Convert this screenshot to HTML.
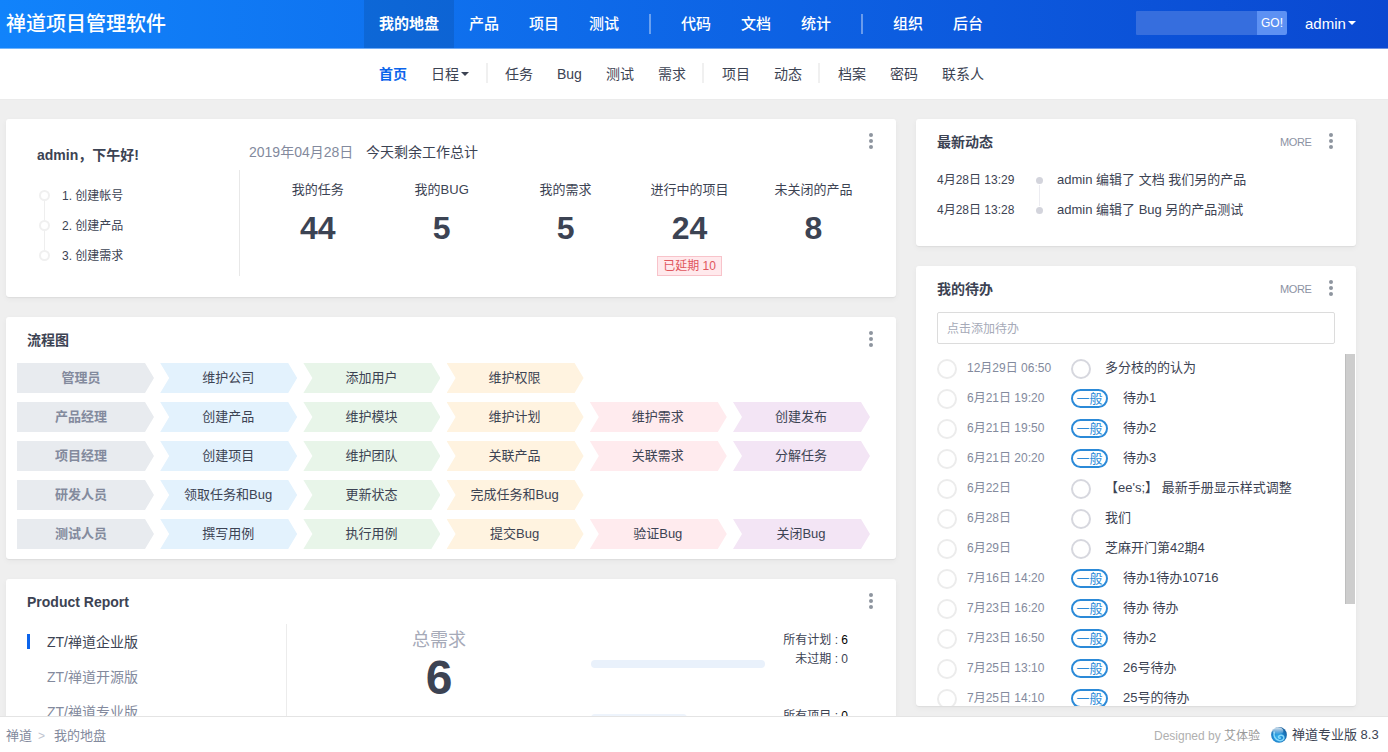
<!DOCTYPE html>
<html lang="zh-CN">
<head>
<meta charset="utf-8">
<title>我的地盘 - 禅道</title>
<style>
*{box-sizing:border-box;margin:0;padding:0}
html,body{width:1388px;height:752px;overflow:hidden}
body{background:#efefef;font-family:"Liberation Sans","Noto Sans CJK SC",sans-serif;font-size:13px;color:#3c4353;position:relative}
.abs{position:absolute;white-space:nowrap}
#header{position:absolute;left:0;top:0;width:1388px;height:49px;background:linear-gradient(180deg,rgba(255,255,255,0) 48px,rgba(255,255,255,.4) 48px),linear-gradient(90deg,#1183fb 0%,#0a48d1 100%)}
#header .title{left:6px;top:0;line-height:49px;font-size:20px;color:#fff;font-weight:500}
#header .nav{top:0;line-height:48px;font-size:15px;color:#fff;font-weight:500}
#header .active{position:absolute;left:364px;top:0;width:90px;height:48px;background:rgba(0,0,0,.1)}
#header .div{position:absolute;top:14px;width:2px;height:20px;background:rgba(255,255,255,.38);margin-left:-1px}
#subnav{position:absolute;left:0;top:49px;width:1388px;height:50px;background:#fff;box-shadow:0 1px 0 #ebebeb}
#subnav .it{top:0;line-height:50px;font-size:14px;color:#3c4353}
#subnav .div{position:absolute;top:14px;width:2px;height:20px;background:#f0f0f0;margin-left:-1px}
.panel{position:absolute;background:#fff;border-radius:3px;box-shadow:0 1px 1px rgba(0,0,0,.05),0 2px 6px 0 rgba(0,0,0,.045)}
.ptitle{font-size:14px;font-weight:bold;color:#3c4353;line-height:20px}
.dots{position:absolute;width:4px}
.dots i{display:block;width:4px;height:4px;border-radius:50%;background:#8e959f;margin-bottom:2px}
.more{font-size:11px;color:#8c92a3;letter-spacing:-0.4px;line-height:20px}
/* welcome */
.step{font-size:12px;line-height:20px;color:#3c4353}
.sc{position:absolute;width:11px;height:11px;border:2px solid #f0f0f0;border-radius:50%;background:#fff}
.tile-t{font-size:13px;line-height:20px;text-align:center;width:124px;color:#3c4353}
.tile-n{font-size:32px;line-height:40px;font-weight:bold;text-align:center;width:124px;color:#3c4353}
/* flow */
.fl{position:absolute;height:30px;width:137px;line-height:30px;font-size:13px;text-align:center;color:#3c4353;
 clip-path:polygon(0 0,128px 0,137px 15px,128px 30px,0 30px,9px 15px);padding-right:1px}
.fl.f0{clip-path:polygon(0 0,128px 0,137px 15px,128px 30px,0 30px);background:#e8ebef;color:#838a9d;font-weight:bold;padding-right:9px}
.f1{background:#e3f2fd}.f2{background:#e8f5e9}.f3{background:#fff3e0}.f4{background:#ffebee}.f5{background:#f3e5f5}
/* todo */
.c1{position:absolute;width:20px;height:20px;border:2px solid #ececec;border-radius:50%}
.c2{position:absolute;width:20px;height:20px;border:2px solid #d6d7de;border-radius:50%}
.pill{position:absolute;width:37px;height:19px;border:2px solid #2b8ad8;border-radius:10px;color:#2b8ad8;font-size:13px;line-height:15px;text-align:center}
.td{font-size:12px;color:#838a9d;line-height:20px}
.tt{font-size:13px;color:#3c4353;line-height:20px}
#footer{position:absolute;left:0;top:716px;width:1388px;height:36px;background:#fff;border-top:1px solid #e4e4e4}
</style>
</head>
<body>
<div id="header">
  <div class="active"></div>
  <div class="abs title">禅道项目管理软件</div>
  <div class="abs nav" style="left:379px;font-weight:bold">我的地盘</div>
  <div class="abs nav" style="left:469px">产品</div>
  <div class="abs nav" style="left:529px">项目</div>
  <div class="abs nav" style="left:589px">测试</div>
  <div class="div" style="left:650px"></div>
  <div class="abs nav" style="left:681px">代码</div>
  <div class="abs nav" style="left:741px">文档</div>
  <div class="abs nav" style="left:801px">统计</div>
  <div class="div" style="left:862px"></div>
  <div class="abs nav" style="left:893px">组织</div>
  <div class="abs nav" style="left:953px">后台</div>
  <div style="position:absolute;left:1136px;top:11px;width:121px;height:24px;background:#366ede;border-radius:1px 0 0 1px"></div>
  <div style="position:absolute;left:1257px;top:11px;width:30px;height:24px;background:#5d91f3;border-radius:0 2px 2px 0;color:#fff;font-size:12px;line-height:25px;text-align:center">GO!</div>
  <div class="abs" style="left:1305px;top:0;line-height:48px;font-size:15px;color:#fff">admin</div>
  <div style="position:absolute;left:1348px;top:21px;width:0;height:0;border-left:4px solid transparent;border-right:4px solid transparent;border-top:4px solid #fff"></div>
</div>
<div id="subnav">
  <div class="abs it" style="left:379px;color:#0c64eb;font-weight:bold">首页</div>
  <div class="abs it" style="left:431px">日程</div>
  <div style="position:absolute;left:461px;top:23px;width:0;height:0;border-left:4px solid transparent;border-right:4px solid transparent;border-top:4px solid #3c4353"></div>
  <div class="div" style="left:487px"></div>
  <div class="abs it" style="left:505px">任务</div>
  <div class="abs it" style="left:557px">Bug</div>
  <div class="abs it" style="left:606px">测试</div>
  <div class="abs it" style="left:658px">需求</div>
  <div class="div" style="left:703px"></div>
  <div class="abs it" style="left:722px">项目</div>
  <div class="abs it" style="left:774px">动态</div>
  <div class="div" style="left:819px"></div>
  <div class="abs it" style="left:838px">档案</div>
  <div class="abs it" style="left:890px">密码</div>
  <div class="abs it" style="left:942px">联系人</div>
</div>

<!-- welcome panel -->
<div class="panel" style="left:6px;top:119px;width:890px;height:178px">
  <div class="abs ptitle" style="left:31px;top:26px">admin，下午好!</div>
  <div style="position:absolute;left:38px;top:76px;width:1px;height:60px;background:#eee"></div>
  <div class="sc" style="left:33px;top:71px"></div>
  <div class="sc" style="left:33px;top:101px"></div>
  <div class="sc" style="left:33px;top:131px"></div>
  <div class="abs step" style="left:56px;top:67px">1. 创建帐号</div>
  <div class="abs step" style="left:56px;top:97px">2. 创建产品</div>
  <div class="abs step" style="left:56px;top:127px">3. 创建需求</div>
  <div style="position:absolute;left:233px;top:51px;width:1px;height:106px;background:#e8e8e8"></div>
  <div class="abs" style="left:243px;top:23px;font-size:14px;line-height:20px;color:#838a9d">2019年04月28日</div>
  <div class="abs" style="left:360px;top:23px;font-size:14px;line-height:20px;color:#3c4353">今天剩余工作总计</div>
  <div class="abs tile-t" style="left:249.8px;top:61px">我的任务</div>
  <div class="abs tile-n" style="left:249.8px;top:88.5px">44</div>
  <div class="abs tile-t" style="left:373.7px;top:61px">我的BUG</div>
  <div class="abs tile-n" style="left:373.7px;top:88.5px">5</div>
  <div class="abs tile-t" style="left:497.6px;top:61px">我的需求</div>
  <div class="abs tile-n" style="left:497.6px;top:88.5px">5</div>
  <div class="abs tile-t" style="left:621.5px;top:61px">进行中的项目</div>
  <div class="abs tile-n" style="left:621.5px;top:88.5px">24</div>
  <div class="abs" style="left:651px;top:137px;width:65px;height:20px;border:1px solid #f8c3ca;background:#ffe9ec;color:#e0565c;font-size:12px;line-height:18px;text-align:center">已延期 10</div>
  <div class="abs tile-t" style="left:745.4px;top:61px">未关闭的产品</div>
  <div class="abs tile-n" style="left:745.4px;top:88.5px">8</div>
  <div class="dots" style="left:863px;top:14px"><i></i><i></i><i></i></div>
</div>

<!-- flowchart panel -->
<div class="panel" id="flow" style="left:6px;top:317px;width:890px;height:242px">
  <div class="abs ptitle" style="left:21px;top:13px">流程图</div>
  <div class="fl f0" style="left:11.0px;top:46px">管理员</div>
  <div class="fl f1" style="left:154.2px;top:46px">维护公司</div>
  <div class="fl f2" style="left:297.4px;top:46px">添加用户</div>
  <div class="fl f3" style="left:440.6px;top:46px">维护权限</div>
  <div class="fl f0" style="left:11.0px;top:85px">产品经理</div>
  <div class="fl f1" style="left:154.2px;top:85px">创建产品</div>
  <div class="fl f2" style="left:297.4px;top:85px">维护模块</div>
  <div class="fl f3" style="left:440.6px;top:85px">维护计划</div>
  <div class="fl f4" style="left:583.8px;top:85px">维护需求</div>
  <div class="fl f5" style="left:727.0px;top:85px">创建发布</div>
  <div class="fl f0" style="left:11.0px;top:124px">项目经理</div>
  <div class="fl f1" style="left:154.2px;top:124px">创建项目</div>
  <div class="fl f2" style="left:297.4px;top:124px">维护团队</div>
  <div class="fl f3" style="left:440.6px;top:124px">关联产品</div>
  <div class="fl f4" style="left:583.8px;top:124px">关联需求</div>
  <div class="fl f5" style="left:727.0px;top:124px">分解任务</div>
  <div class="fl f0" style="left:11.0px;top:163px">研发人员</div>
  <div class="fl f1" style="left:154.2px;top:163px">领取任务和Bug</div>
  <div class="fl f2" style="left:297.4px;top:163px">更新状态</div>
  <div class="fl f3" style="left:440.6px;top:163px">完成任务和Bug</div>
  <div class="fl f0" style="left:11.0px;top:202px">测试人员</div>
  <div class="fl f1" style="left:154.2px;top:202px">撰写用例</div>
  <div class="fl f2" style="left:297.4px;top:202px">执行用例</div>
  <div class="fl f3" style="left:440.6px;top:202px">提交Bug</div>
  <div class="fl f4" style="left:583.8px;top:202px">验证Bug</div>
  <div class="fl f5" style="left:727.0px;top:202px">关闭Bug</div>
  <div class="dots" style="left:863px;top:14px"><i></i><i></i><i></i></div>
</div>

<!-- product report panel -->
<div class="panel" style="left:6px;top:579px;width:890px;height:200px">
  <div class="abs ptitle" style="left:21px;top:13px">Product Report</div>
  <div class="dots" style="left:863px;top:14px"><i></i><i></i><i></i></div>
  <div style="position:absolute;left:21px;top:55px;width:3px;height:15px;background:#0c64eb"></div>
  <div class="abs" style="left:41px;top:53px;font-size:14px;line-height:20px;color:#3c4353">ZT/禅道企业版</div>
  <div class="abs" style="left:41px;top:88px;font-size:14px;line-height:20px;color:#838a9d">ZT/禅道开源版</div>
  <div class="abs" style="left:41px;top:123px;font-size:14px;line-height:20px;color:#838a9d">ZT/禅道专业版</div>
  <div style="position:absolute;left:280px;top:45px;width:1px;height:120px;background:#ececec"></div>
  <div class="abs" style="left:383px;top:48px;width:100px;text-align:center;font-size:18px;line-height:26px;color:#a6aab8">总需求</div>
  <div class="abs" style="left:383px;top:71px;width:100px;text-align:center;font-size:48px;line-height:56px;font-weight:bold;color:#3c4353">6</div>
  <div style="position:absolute;left:585px;top:81px;width:174px;height:8px;border-radius:4px;background:#e9f1fb"></div>
  <div style="position:absolute;left:585px;top:135px;width:96px;height:8px;border-radius:4px;background:#eef4fc"></div>
  <div class="abs" style="right:48px;top:51px;font-size:12px;line-height:20px;color:#3c4353">所有计划 : <span style="color:#000">6</span></div>
  <div class="abs" style="right:48px;top:70px;font-size:12px;line-height:20px;color:#3c4353">未过期 : 0</div>
  <div class="abs" style="right:48px;top:127px;font-size:12px;line-height:20px;color:#3c4353">所有项目 : <span style="color:#000">0</span></div>
</div>

<!-- dynamic panel -->
<div class="panel" style="left:916px;top:119px;width:440px;height:127px">
  <div class="abs ptitle" style="left:21px;top:13px">最新动态</div>
  <div class="abs more" style="left:364px;top:13px">MORE</div>
  <div class="dots" style="left:413px;top:14px"><i></i><i></i><i></i></div>
  <div style="position:absolute;left:123px;top:66px;width:1px;height:21px;background:#ececf1"></div>
  <div style="position:absolute;left:120px;top:58px;width:7px;height:7px;border-radius:50%;background:#d3d4dc"></div>
  <div style="position:absolute;left:120px;top:88px;width:7px;height:7px;border-radius:50%;background:#d3d4dc"></div>
  <div class="abs" style="left:21px;top:51px;font-size:12px;line-height:20px;color:#3c4353">4月28日 13:29</div>
  <div class="abs" style="left:21px;top:81px;font-size:12px;line-height:20px;color:#3c4353">4月28日 13:28</div>
  <div class="abs" style="left:141px;top:51px;font-size:13px;line-height:20px;color:#3c4353">admin 编辑了 文档 我们另的产品</div>
  <div class="abs" style="left:141px;top:81px;font-size:13px;line-height:20px;color:#3c4353">admin 编辑了 Bug 另的产品测试</div>
</div>

<!-- todo panel -->
<div class="panel" id="todo" style="left:916px;top:266px;width:440px;height:440px;overflow:hidden">
  <div class="abs ptitle" style="left:21px;top:13px">我的待办</div>
  <div class="abs more" style="left:364px;top:13px">MORE</div>
  <div class="dots" style="left:413px;top:14px"><i></i><i></i><i></i></div>
  <div style="position:absolute;left:21px;top:46px;width:398px;height:32px;border:1px solid #dcdcdc;border-radius:2px;font-size:12px;line-height:32px;color:#a6aab8;padding-left:9px">点击添加待办</div>
  <div class="c1" style="left:21px;top:92.5px"></div>
  <div class="abs td" style="left:51px;top:91.5px">12月29日 06:50</div>
  <div class="c2" style="left:155px;top:92.5px"></div>
  <div class="abs tt" style="left:189px;top:91.5px">多分枝的的认为</div>
  <div class="c1" style="left:21px;top:122.5px"></div>
  <div class="abs td" style="left:51px;top:121.5px">6月21日 19:20</div>
  <div class="pill" style="left:155px;top:123.0px">一般</div>
  <div class="abs tt" style="left:207px;top:121.5px">待办1</div>
  <div class="c1" style="left:21px;top:152.5px"></div>
  <div class="abs td" style="left:51px;top:151.5px">6月21日 19:50</div>
  <div class="pill" style="left:155px;top:153.0px">一般</div>
  <div class="abs tt" style="left:207px;top:151.5px">待办2</div>
  <div class="c1" style="left:21px;top:182.5px"></div>
  <div class="abs td" style="left:51px;top:181.5px">6月21日 20:20</div>
  <div class="pill" style="left:155px;top:183.0px">一般</div>
  <div class="abs tt" style="left:207px;top:181.5px">待办3</div>
  <div class="c1" style="left:21px;top:212.5px"></div>
  <div class="abs td" style="left:51px;top:211.5px">6月22日</div>
  <div class="c2" style="left:155px;top:212.5px"></div>
  <div class="abs tt" style="left:189px;top:211.5px">【ee's;】 最新手册显示样式调整</div>
  <div class="c1" style="left:21px;top:242.5px"></div>
  <div class="abs td" style="left:51px;top:241.5px">6月28日</div>
  <div class="c2" style="left:155px;top:242.5px"></div>
  <div class="abs tt" style="left:189px;top:241.5px">我们</div>
  <div class="c1" style="left:21px;top:272.5px"></div>
  <div class="abs td" style="left:51px;top:271.5px">6月29日</div>
  <div class="c2" style="left:155px;top:272.5px"></div>
  <div class="abs tt" style="left:189px;top:271.5px">芝麻开门第42期4</div>
  <div class="c1" style="left:21px;top:302.5px"></div>
  <div class="abs td" style="left:51px;top:301.5px">7月16日 14:20</div>
  <div class="pill" style="left:155px;top:303.0px">一般</div>
  <div class="abs tt" style="left:207px;top:301.5px">待办1待办10716</div>
  <div class="c1" style="left:21px;top:332.5px"></div>
  <div class="abs td" style="left:51px;top:331.5px">7月23日 16:20</div>
  <div class="pill" style="left:155px;top:333.0px">一般</div>
  <div class="abs tt" style="left:207px;top:331.5px">待办 待办</div>
  <div class="c1" style="left:21px;top:362.5px"></div>
  <div class="abs td" style="left:51px;top:361.5px">7月23日 16:50</div>
  <div class="pill" style="left:155px;top:363.0px">一般</div>
  <div class="abs tt" style="left:207px;top:361.5px">待办2</div>
  <div class="c1" style="left:21px;top:392.5px"></div>
  <div class="abs td" style="left:51px;top:391.5px">7月25日 13:10</div>
  <div class="pill" style="left:155px;top:393.0px">一般</div>
  <div class="abs tt" style="left:207px;top:391.5px">26号待办</div>
  <div class="c1" style="left:21px;top:422.5px"></div>
  <div class="abs td" style="left:51px;top:421.5px">7月25日 14:10</div>
  <div class="pill" style="left:155px;top:423.0px">一般</div>
  <div class="abs tt" style="left:207px;top:421.5px">25号的待办</div>
  <div style="position:absolute;left:429px;top:88px;width:10px;height:250px;background:#cdcdcd;border-left:1px solid #bebebe"></div>
</div>

<div id="footer">
  <div class="abs" style="left:6px;top:9px;font-size:13px;line-height:20px;color:#838a9d">禅道</div>
  <div class="abs" style="left:38px;top:9px;font-size:12px;line-height:20px;color:#c0c4cf">&gt;</div>
  <div class="abs" style="left:54px;top:9px;font-size:13px;line-height:20px;color:#838a9d">我的地盘</div>
  <div class="abs" style="left:1154px;top:9px;font-size:12px;line-height:20px;color:#b0b0b0">Designed by</div>
  <div class="abs" style="left:1224px;top:9px;font-size:12px;line-height:20px;color:#999">艾体验</div>
  <svg style="position:absolute;left:1271px;top:9px" width="16" height="17" viewBox="0 0 16 17">
    <defs>
      <radialGradient id="g" cx="0.42" cy="0.62" r="0.62"><stop offset="0" stop-color="#38b4ee"/><stop offset="0.55" stop-color="#1f86cf"/><stop offset="1" stop-color="#15609f"/></radialGradient>
      <linearGradient id="h" x1="0" y1="0" x2="0" y2="1"><stop offset="0" stop-color="#fff" stop-opacity=".85"/><stop offset="1" stop-color="#fff" stop-opacity="0"/></linearGradient>
    </defs>
    <circle cx="8" cy="8.900" r="7.900" fill="url(#g)"/>
    <path d="M3.200 6.200C2.400 9.800 4 13.600 8 14.600C11 15.200 13.400 13.200 12.800 11.100C12.200 9.200 9.500 8.700 8 10C7.100 11 7.800 12.400 9.300 12.100" fill="none" stroke="#8fe0ff" stroke-width="1.500" stroke-linecap="round" opacity=".9"/>
    <ellipse cx="6.800" cy="4.900" rx="5.600" ry="3.600" fill="url(#h)"/>
  </svg>
  <div class="abs" style="left:1292px;top:8px;font-size:13px;line-height:20px;color:#3c4353">禅道专业版 8.3</div>
</div>
</body>
</html>
